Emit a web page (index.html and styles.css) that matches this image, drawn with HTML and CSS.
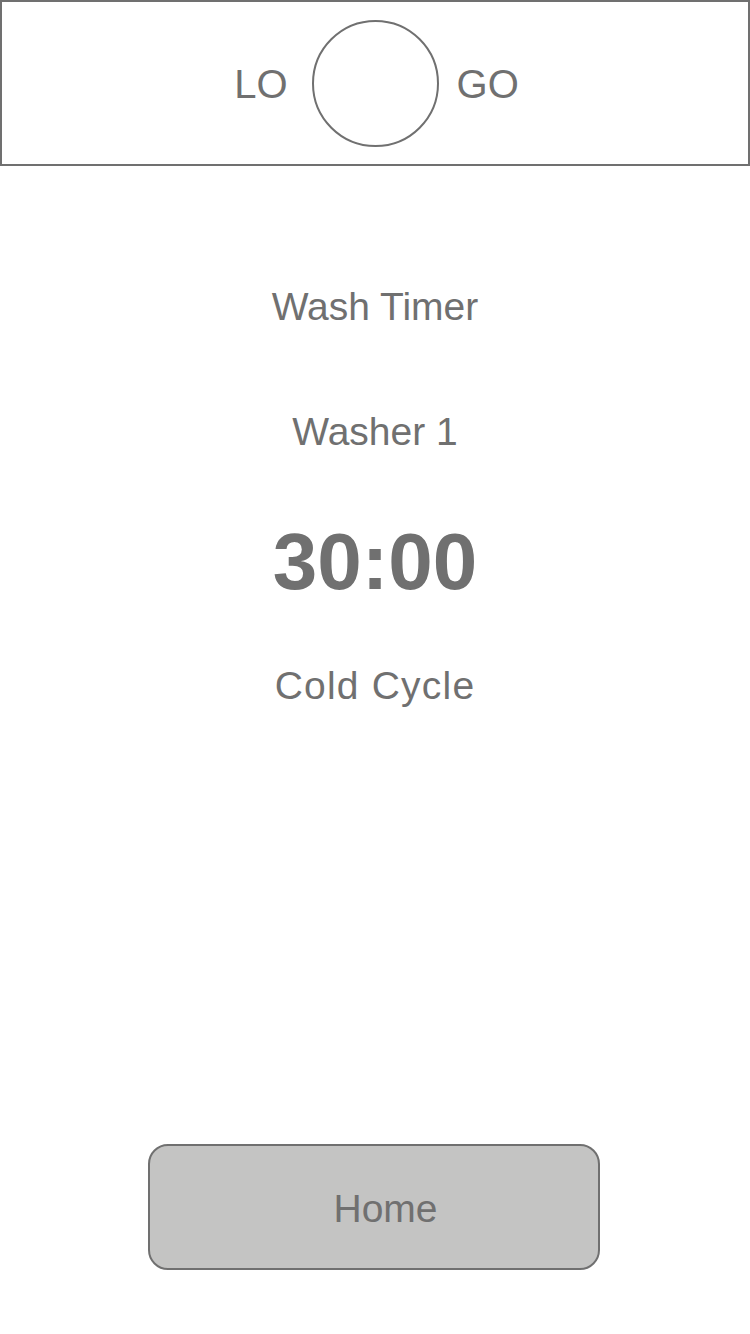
FILE: index.html
```html
<!DOCTYPE html>
<html lang="en">
<head>
<meta charset="utf-8">
<title>Wash Timer</title>
<link rel="stylesheet" href="styles.css">
</head>
<body>
<div class="page">
  <header class="header">
    <span class="logo-text logo-left">LO</span>
    <span class="logo-circle"></span>
    <span class="logo-text logo-right">GO</span>
  </header>
  <main class="content">
    <h1 class="title">Wash Timer</h1>
    <p class="washer">Washer 1</p>
    <p class="timer">30:00</p>
    <p class="cycle">Cold Cycle</p>
  </main>
  <button class="home-btn" type="button">Home</button>
</div>
</body>
</html>
```

FILE: styles.css
```css
* {
  box-sizing: border-box;
}

html, body {
  margin: 0;
  padding: 0;
  background: #ffffff;
}

body {
  font-family: "Liberation Sans", Arial, Helvetica, sans-serif;
  color: #707070;
}

.page {
  width: 750px;
  min-height: 1334px;
  display: flex;
  flex-direction: column;
  align-items: center;
}

.header {
  width: 750px;
  height: 166px;
  border: 2px solid #707070;
  display: flex;
  align-items: center;
  justify-content: center;
  padding-left: 3px;
}

.logo-text {
  font-size: 40px;
  line-height: 40px;
  padding-top: 1px;
}

.logo-left {
  margin-right: 24px;
}

.logo-right {
  margin-left: 18px;
}

.logo-circle {
  width: 127px;
  height: 127px;
  border: 2px solid #707070;
  border-radius: 50%;
  margin-top: 1px;
}

.content {
  width: 100%;
  display: flex;
  flex-direction: column;
  align-items: center;
  padding-top: 121px;
}

.title,
.washer,
.cycle {
  margin: 0;
  font-size: 39px;
  line-height: 39px;
  font-weight: normal;
}

.washer {
  margin-top: 86px;
}

.timer {
  margin: 71px 0 0;
  font-size: 80px;
  line-height: 80px;
  font-weight: bold;
}

.cycle {
  margin-top: 64px;
  letter-spacing: 1.2px;
}

.home-btn {
  margin-top: auto;
  margin-bottom: 64px;
  margin-right: 2px;
  width: 452px;
  height: 126px;
  border: 2px solid #707070;
  border-radius: 20px;
  background: #c4c4c3;
  color: #707070;
  font-family: "Liberation Sans", Arial, Helvetica, sans-serif;
  font-size: 39px;
  line-height: 39px;
  padding: 3px 0 0 23px;
}
```
